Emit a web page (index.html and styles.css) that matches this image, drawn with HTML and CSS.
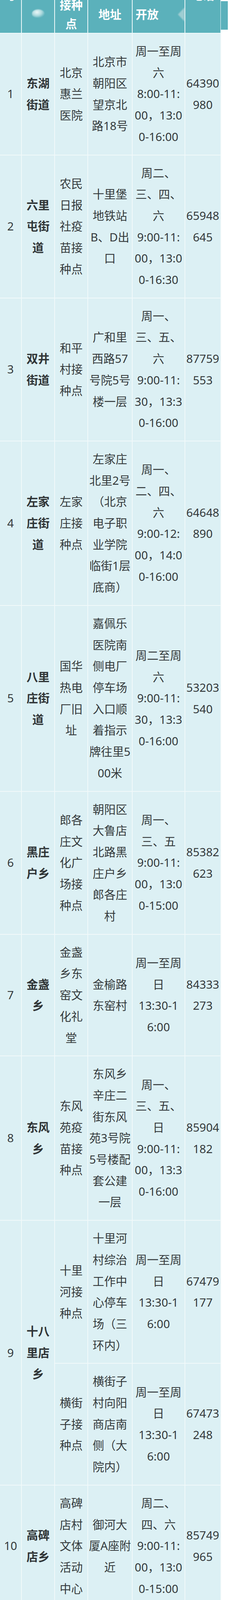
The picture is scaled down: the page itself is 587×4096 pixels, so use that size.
FILE: index.html
```html
<!DOCTYPE html>
<html lang="zh-CN">
<head>
<meta charset="utf-8">
<title>接种点</title>
<link rel="stylesheet" href="styles.css">
</head>
<body>
<div class="page">
  <div class="hdr-tab"></div>
  <table class="sites">
    <colgroup>
      <col class="c-no"><col class="c-area"><col class="c-site"><col class="c-addr"><col class="c-time"><col class="c-tel">
    </colgroup>
    <thead>
      <tr>
        <th><div class="hd hd-clip"><span class="peek">号</span></div></th>
        <th><div class="hd"><span class="glare"></span></div></th>
        <th><div class="hd">接种<br>点</div></th>
        <th><div class="hd">地址</div></th>
        <th><div class="hd hd-left"><span>开放</span><span class="fold"></span></div></th>
        <th><div class="hd hd-clip"><span class="peek">电话</span></div></th>
      </tr>
    </thead>
    <tbody>
      <tr>
        <td>1</td>
        <td class="area">东湖<br>街道</td>
        <td>北京<br>惠兰<br>医院</td>
        <td>北京市<br>朝阳区<br>望京北<br>路18号</td>
        <td>周一至周<br>六<br>8:00-11:<br>00，13:0<br>0-16:00</td>
        <td>64390<br>980</td>
      </tr>
      <tr>
        <td>2</td>
        <td class="area">六里<br>屯街<br>道</td>
        <td>农民<br>日报<br>社疫<br>苗接<br>种点</td>
        <td>十里堡<br>地铁站<br>B、D出<br>口</td>
        <td>周二、<br>三、四、<br>六<br>9:00-11:<br>00，13:0<br>0-16:30</td>
        <td>65948<br>645</td>
      </tr>
      <tr>
        <td>3</td>
        <td class="area">双井<br>街道</td>
        <td>和平<br>村接<br>种点</td>
        <td>广和里<br>西路57<br>号院5号<br>楼一层</td>
        <td>周一、<br>三、五、<br>六<br>9:00-11:<br>30，13:3<br>0-16:00</td>
        <td>87759<br>553</td>
      </tr>
      <tr>
        <td>4</td>
        <td class="area">左家<br>庄街<br>道</td>
        <td>左家<br>庄接<br>种点</td>
        <td>左家庄<br>北里2号<br>（北京<br>电子职<br>业学院<br>临街1层<br>底商）</td>
        <td>周一、<br>二、四、<br>六<br>9:00-12:<br>00，14:0<br>0-16:00</td>
        <td>64648<br>890</td>
      </tr>
      <tr>
        <td>5</td>
        <td class="area">八里<br>庄街<br>道</td>
        <td>国华<br>热电<br>厂旧<br>址</td>
        <td>嘉佩乐<br>医院南<br>侧电厂<br>停车场<br>入口顺<br>着指示<br>牌往里5<br>00米</td>
        <td>周二至周<br>六<br>9:00-11:<br>30，13:3<br>0-16:00</td>
        <td>53203<br>540</td>
      </tr>
      <tr>
        <td>6</td>
        <td class="area">黑庄<br>户乡</td>
        <td>郎各<br>庄文<br>化广<br>场接<br>种点</td>
        <td>朝阳区<br>大鲁店<br>北路黑<br>庄户乡<br>郎各庄<br>村</td>
        <td>周一、<br>三、五<br>9:00-11:<br>00，13:0<br>0-15:00</td>
        <td>85382<br>623</td>
      </tr>
      <tr>
        <td>7</td>
        <td class="area">金盏<br>乡</td>
        <td>金盏<br>乡东<br>窑文<br>化礼<br>堂</td>
        <td>金榆路<br>东窑村</td>
        <td>周一至周<br>日<br>13:30-1<br>6:00</td>
        <td>84333<br>273</td>
      </tr>
      <tr>
        <td>8</td>
        <td class="area">东风<br>乡</td>
        <td>东风<br>苑疫<br>苗接<br>种点</td>
        <td>东风乡<br>辛庄二<br>街东风<br>苑3号院<br>5号楼配<br>套公建<br>一层</td>
        <td>周一、<br>三、五、<br>日<br>9:00-11:<br>00，13:3<br>0-16:00</td>
        <td>85904<br>182</td>
      </tr>
      <tr>
        <td rowspan="2">9</td>
        <td rowspan="2" class="area">十八<br>里店<br>乡</td>
        <td>十里<br>河接<br>种点</td>
        <td>十里河<br>村综治<br>工作中<br>心停车<br>场（三<br>环内）</td>
        <td>周一至周<br>日<br>13:30-1<br>6:00</td>
        <td>67479<br>177</td>
      </tr>
      <tr>
        <td>横街<br>子接<br>种点</td>
        <td>横街子<br>村向阳<br>商店南<br>侧（大<br>院内）</td>
        <td>周一至周<br>日<br>13:30-1<br>6:00</td>
        <td>67473<br>248</td>
      </tr>
      <tr>
        <td>10</td>
        <td class="area">高碑<br>店乡</td>
        <td>高碑<br>店村<br>文体<br>活动<br>中心</td>
        <td>御河大<br>厦A座附<br>近</td>
        <td>周二、<br>四、六<br>9:00-11:<br>00，13:0<br>0-15:00</td>
        <td>85749<br>965</td>
      </tr>
    </tbody>
  </table>
</div>
</body>
</html>
```
FILE: styles.css
```css
html, body {
  margin: 0;
  padding: 0;
  background: #ffffff;
}

.page {
  position: relative;
  height: 4096px;
  overflow: hidden;
}

.sites {
  border-collapse: separate;
  border-spacing: 0;
  table-layout: fixed;
  width: 566.5px;
  font-family: "Noto Sans", "Noto Sans CJK SC", sans-serif;
  font-size: 29.5px;
  color: #34393b;
}

.c-no { width: 56px; }
.c-area { width: 85px; }
.c-site { width: 85px; }
.c-addr { width: 113.5px; }
.c-time { width: 135.5px; }
.c-tel { width: 91.5px; }

.sites th {
  background: #5bb1bb;
  color: #ffffff;
  font-weight: 700;
  padding: 0;
  border-right: 2px solid #eef8f9;
  border-bottom: 2px solid #eef8f9;
}

.hd {
  height: 84px;
  box-sizing: border-box;
  padding-bottom: 10px;
  display: flex;
  flex-direction: column;
  align-items: center;
  justify-content: center;
  line-height: 48px;
  overflow: hidden;
  text-align: center;
}

.hd-clip {
  justify-content: flex-start;
  padding-bottom: 0;
}

.peek {
  margin-top: -36px;
  line-height: 48px;
}

.hd-left {
  flex-direction: row;
  justify-content: space-between;
  padding-left: 8px;
}

.fold {
  width: 0;
  height: 0;
  border-top: 18px solid transparent;
  border-bottom: 18px solid transparent;
  border-right: 17px solid rgba(214, 228, 230, 0.55);
  filter: blur(1.5px);
}

.glare {
  width: 32px;
  height: 21px;
  margin-top: -6px;
  border-radius: 55% 55% 45% 45%;
  background: radial-gradient(ellipse at 40% 35%, rgba(245, 252, 252, 0.95) 0%, rgba(210, 236, 238, 0.7) 45%, rgba(120, 190, 198, 0) 80%);
  filter: blur(1.2px);
}

.hdr-tab {
  position: absolute;
  left: 566px;
  top: 3px;
  width: 18px;
  height: 73px;
  background: #5bb1bb;
}

.sites td {
  background: #dcf0f4;
  border-right: 2px solid #f1f9fa;
  border-bottom: 2px solid #f1f9fa;
  padding: 18px 0;
  line-height: 54.7px;
  text-align: center;
  vertical-align: middle;
  white-space: nowrap;
}

.sites td.area {
  font-weight: 700;
  color: #2f3436;
}
```
